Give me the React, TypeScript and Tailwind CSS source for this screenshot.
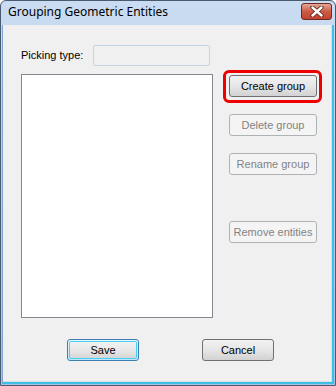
import React from "react";

const btnBase =
  "h-[22px] rounded-[3px] border border-[#707070] bg-gradient-to-b from-[#f2f2f2] via-[#e6e6e6] to-[#d2d2d2] text-[11px] text-black flex items-center justify-center";
const disabledBtn =
  "h-[22px] w-[88px] rounded-[3px] border border-[#adb2b5] bg-[#f4f4f4] text-[11px] text-[#838383] flex items-center justify-center";

export default function App() {
  return (
    <div className="w-[336px] h-[386px] bg-white font-['Liberation_Sans',Arial,sans-serif]">
      <div className="w-[336px] h-[386px] flex flex-col rounded-t-[6px] border border-[#4a5b70] bg-gradient-to-b from-[#cadcf1] to-[#a6c3e5] overflow-hidden">
        {/* title bar */}
        <div className="h-[24px] shrink-0 flex items-center pl-[7px] pr-[3px]">
          <span className="text-[12px] text-black font-['Noto_Sans',sans-serif] leading-none mt-[-2px]">
            Grouping Geometric Entities
          </span>
          <div className="ml-auto mt-[-3px] w-[31px] h-[17px] rounded-[3px] border border-[#6b2b26] bg-gradient-to-b from-[#e3a597] via-[#cc5b46] to-[#c2432c] flex items-center justify-center">
            <svg width="14" height="11" viewBox="0 0 14 11">
              <path
                d="M2.5 1.5 L11.5 9.5 M11.5 1.5 L2.5 9.5"
                stroke="#5a2a24"
                strokeWidth="4.2"
                strokeLinecap="round"
                fill="none"
              />
              <path
                d="M2.5 1.5 L11.5 9.5 M11.5 1.5 L2.5 9.5"
                stroke="#ffffff"
                strokeWidth="2.4"
                strokeLinecap="round"
                fill="none"
              />
            </svg>
          </div>
        </div>

        {/* client area */}
        <div className="flex-1 ml-[1px] mr-[1px] mb-[1px] border-l border-[#7fa6d3] border-r-2 border-b-2 border-r-[#3cc0e6] border-b-[#3cc0e6]">
          <div className="h-full bg-[#f0f0f0] border-r border-b border-[#dfdfdf] pl-[18px] pt-[20px] flex flex-col">
            <div className="flex items-center h-[21px]">
              <span className="w-[72px] text-[11px] text-black">Picking type:</span>
              <div className="w-[117px] h-[21px] rounded-[2px] border border-[#c3d3e5] bg-[#f0f0f0]" />
            </div>

            <div className="flex mt-[8px]">
              <div className="w-[192px] h-[244px] border border-[#828790] bg-white" />
              <div className="ml-[16px] pt-[1px] flex flex-col">
                <div className="relative">
                  <div className="absolute left-[-6px] top-[-5px] w-[99px] h-[33px] rounded-[6px] border-[3px] border-[#ee0000]" />
                  <div className={`${btnBase} w-[88px]`}>Create group</div>
                </div>
                <div className={`${disabledBtn} mt-[17px]`}>Delete group</div>
                <div className={`${disabledBtn} mt-[17px]`}>Rename group</div>
                <div className={`${disabledBtn} mt-[46px]`}>Remove entities</div>
              </div>
            </div>

            <div className="flex mt-[21px] pl-[46px]">
              <div className="w-[72px] h-[22px] rounded-[3px] border border-[#3c7fb1] bg-gradient-to-b from-[#eaf6fd] via-[#d9eefa] to-[#bee6fd] p-[1px]">
                <div className="w-full h-full rounded-[2px] border border-[#48cff6] bg-gradient-to-b from-[#f2f2f2] via-[#e8e8e8] to-[#d6d6d6] flex items-center justify-center text-[11px] text-black">
                  Save
                </div>
              </div>
              <div className={`${btnBase} w-[72px] ml-[63px]`}>Cancel</div>
            </div>
          </div>
        </div>
      </div>
    </div>
  );
}
